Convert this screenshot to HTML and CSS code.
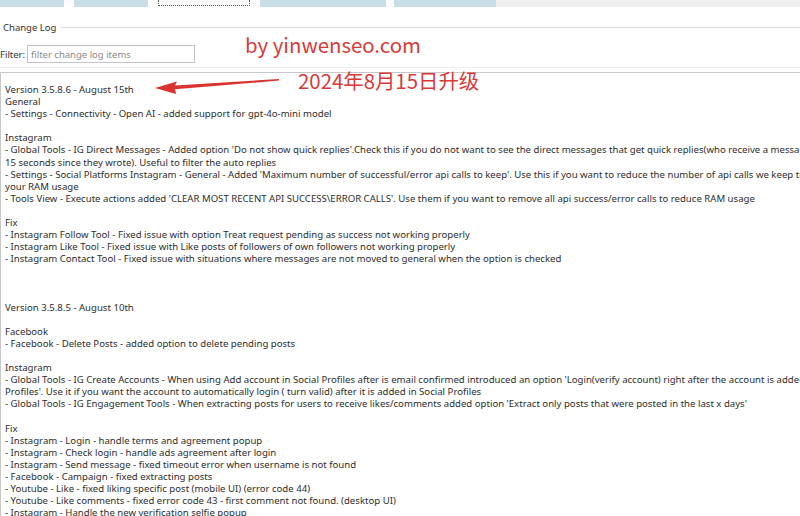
FILE: index.html
```html
<!DOCTYPE html>
<html>
<head>
<meta charset="utf-8">
<link rel="stylesheet" href="styles.css">
</head>
<body>
<div class="page">
  <div class="tabs">
    <div class="tab t1"></div>
    <div class="tab t2"></div>
    <div class="tab sel"><div class="focus"></div></div>
    <div class="tab t4"></div>
    <div class="tab t5"></div>
    <div class="tab-fill"></div>
  </div>
  <div class="group-head">
    <span class="group-title">Change Log</span>
    <span class="group-line"></span>
  </div>
  <div class="filter-row">
    <label class="filter-label">Filter:</label>
    <input class="filter-input" type="text" placeholder="filter change log items">
  </div>
  <div class="group-bottom"></div>
  <div class="log">
<div class="ln">Version 3.5.8.6 - August 15th</div>
<div class="ln">General</div>
<div class="ln">- Settings - Connectivity - Open AI - added support for gpt-4o-mini model</div>
<div class="ln">&nbsp;</div>
<div class="ln">Instagram</div>
<div class="ln">- Global Tools - IG Direct Messages - Added option 'Do not show quick replies'.Check this if you do not want to see the direct messages that get quick replies(who receive a message in the last</div>
<div class="ln">15 seconds since they wrote). Useful to filter the auto replies</div>
<div class="ln">- Settings - Social Platforms Instagram - General - Added 'Maximum number of successful/error api calls to keep'. Use this if you want to reduce the number of api calls we keep track of to reduce</div>
<div class="ln">your RAM usage</div>
<div class="ln">- Tools View - Execute actions added 'CLEAR MOST RECENT API SUCCESS\ERROR CALLS'. Use them if you want to remove all api success/error calls to reduce RAM usage</div>
<div class="ln">&nbsp;</div>
<div class="ln">Fix</div>
<div class="ln">- Instagram Follow Tool - Fixed issue with option Treat request pending as success not working properly</div>
<div class="ln">- Instagram Like Tool - Fixed issue with Like posts of followers of own followers not working properly</div>
<div class="ln">- Instagram Contact Tool - Fixed issue with situations where messages are not moved to general when the option is checked</div>
<div class="ln">&nbsp;</div>
<div class="ln">&nbsp;</div>
<div class="ln">&nbsp;</div>
<div class="ln">Version 3.5.8.5 - August 10th</div>
<div class="ln">&nbsp;</div>
<div class="ln">Facebook</div>
<div class="ln">- Facebook - Delete Posts - added option to delete pending posts</div>
<div class="ln">&nbsp;</div>
<div class="ln">Instagram</div>
<div class="ln">- Global Tools - IG Create Accounts - When using Add account in Social Profiles after is email confirmed introduced an option 'Login(verify account) right after the account is added in Social</div>
<div class="ln">Profiles'. Use it if you want the account to automatically login ( turn valid) after it is added in Social Profiles</div>
<div class="ln">- Global Tools - IG Engagement Tools - When extracting posts for users to receive likes/comments added option 'Extract only posts that were posted in the last x days'</div>
<div class="ln">&nbsp;</div>
<div class="ln">Fix</div>
<div class="ln">- Instagram - Login - handle terms and agreement popup</div>
<div class="ln">- Instagram - Check login - handle ads agreement after login</div>
<div class="ln">- Instagram - Send message - fixed timeout error when username is not found</div>
<div class="ln">- Facebook - Campaign - fixed extracting posts</div>
<div class="ln">- Youtube - Like - fixed liking specific post (mobile UI) (error code 44)</div>
<div class="ln">- Youtube - Like comments - fixed error code 43 - first comment not found. (desktop UI)</div>
<div class="ln">- Instagram - Handle the new verification selfie popup</div>
<div class="ln">&nbsp;</div>
  </div>

  <div class="wm wm-site">by yinwenseo.com</div>
  <div class="wm wm-date">2024年8月15日升级</div>
  <svg class="wm-arrow" width="800" height="516" viewBox="0 0 800 516">
    <polygon points="155,88 177,81.5 175,85.6 279,79 279,80.6 175,89.2 176,94" fill="#d9342f"/>
  </svg>
</div>
</body>
</html>
```

FILE: styles.css
```css
html, body {
  margin: 0;
  padding: 0;
  background: #ffffff;
}
body {
  width: 800px;
  height: 516px;
  overflow: hidden;
  font-family: "Noto Sans", "Liberation Sans", sans-serif;
  color: #2e2e2e;
}
.page {
  position: relative;
  width: 800px;
  height: 516px;
  overflow: hidden;
}
.tabs {
  display: flex;
  height: 7px;
  background: #fdfbfb;
}
.tab {
  height: 7px;
  background: #c9dde7;
}
.t1 { width: 64px; margin-right: 10px; }
.t2 { width: 74px; margin-right: 5px; }
.sel {
  width: 97px;
  background: #ffffff;
  margin-right: 10px;
  padding-left: 5px;
  box-sizing: border-box;
}
.focus {
  height: 6px;
  border: 1px dotted #555;
  border-top: none;
  box-sizing: border-box;
}
.t4 { width: 126px; margin-right: 8px; }
.t5 { width: 102px; }
.tab-fill {
  flex: 1;
  background: #efefef;
}
.group-head {
  display: flex;
  align-items: center;
  margin-top: 13px;
  height: 14px;
}
.group-title {
  font-size: 9.5px;
  color: #333;
  padding-left: 3px;
  padding-right: 5px;
}
.group-line {
  flex: 1;
  height: 1px;
  background: #d9d9d9;
}
.filter-row {
  display: flex;
  align-items: center;
  margin-top: 11px;
  height: 18px;
}
.filter-label {
  font-size: 9.5px;
  color: #333;
  width: 27px;
}
.filter-input {
  width: 168px;
  height: 18px;
  box-sizing: border-box;
  border: 1px solid #c4c4c4;
  padding: 0 3px;
  font-family: "Noto Sans", "Liberation Sans", sans-serif;
  font-size: 9.5px;
  color: #333;
  outline: none;
  margin: 0;
}
.filter-input::placeholder {
  color: #8a8a8a;
}
.group-bottom {
  margin-top: 4px;
  height: 1px;
  background: #efefef;
}
.log {
  margin-top: 4px;
  border-top: 1px solid #c8c8c8;
  border-left: 1px solid #c8c8c8;
  padding: 11px 0 0 4px;
  font-size: 9.6px;
  line-height: 12.1px;
  height: 450px;
  overflow: hidden;
}
.ln {
  white-space: pre;
}
.wm {
  position: absolute;
  font-family: "Noto Sans CJK SC", "Noto Sans", sans-serif;
  color: #d83a3a;
  font-size: 20.4px;
  line-height: 24px;
  white-space: nowrap;
}
.wm-site {
  left: 245px;
  top: 32px;
}
.wm-date {
  left: 298px;
  top: 68px;
}
.wm-arrow {
  position: absolute;
  left: 0;
  top: 0;
}
```
